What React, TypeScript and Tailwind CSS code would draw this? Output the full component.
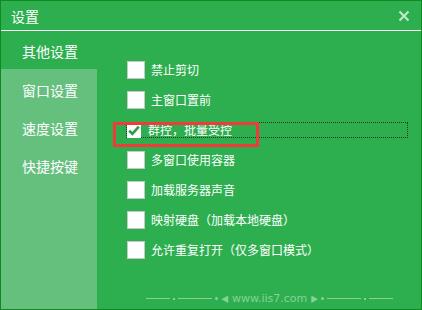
import React from 'react';

const font = { fontFamily: '"Microsoft YaHei", "Noto Sans CJK SC", "Noto Sans", sans-serif' };

const menu = ['窗口设置', '速度设置', '快捷按键'];

const opts = [
  { label: '禁止剪切' },
  { label: '主窗口置前' },
  { label: '群控，批量受控', checked: true },
  { label: '多窗口使用容器' },
  { label: '加载服务器声音' },
  { label: '映射硬盘（加载本地硬盘）' },
  { label: '允许重复打开（仅多窗口模式）' },
];

const Box = () => <div className="w-[18px] h-[18px] shrink-0 bg-white border border-[#c8c8c8]" />;

export default function App() {
  return (
    <div
      className="relative w-[422px] h-[310px] bg-[#2daf50] border border-[#10891f] flex flex-col text-white overflow-hidden"
      style={font}
    >
      {/* title */}
      <div className="h-[30px] shrink-0 flex items-center justify-between pl-[10px] pr-[10px] border-b border-white">
        <span className="text-[14px] leading-none">设置</span>
        <svg width="12" height="12" viewBox="0 0 12 12" className="mr-[1px]">
          <path d="M1.5 1.5 L10.5 10.5 M10.5 1.5 L1.5 10.5" stroke="#bfe8c9" strokeWidth="2.2" />
        </svg>
      </div>

      <div className="flex flex-1 min-h-0">
        {/* sidebar */}
        <div className="w-[96px] shrink-0 flex flex-col text-[14px]">
          <div className="h-[38px] flex items-center pl-[21px] pt-[2px]">其他设置</div>
          <div className="flex-1 bg-[#65c07e] pt-[2px]">
            {menu.map((m) => (
              <div key={m} className="h-[38px] flex items-center pl-[21px]">
                {m}
              </div>
            ))}
          </div>
        </div>

        {/* content */}
        <div className="flex-1 flex flex-col pt-[24px] pl-[30px] text-[12px]">
          {opts.map((o) =>
            o.checked ? (
              <div key={o.label} className="h-[30px] flex items-center">
                <div className="h-[16px] w-[282px] -ml-[1px] border border-dotted border-[#1b3b22] flex items-center">
                  <div className="w-[14px] h-[15px] bg-white flex items-center justify-center">
                    <svg width="12" height="11" viewBox="0 0 12 11">
                      <path d="M1.2 5.6 L4.4 8.8 L10.8 1.6" fill="none" stroke="#2a9c46" strokeWidth="2.6" />
                    </svg>
                  </div>
                  <span className="ml-[7px] leading-none">{o.label}</span>
                </div>
              </div>
            ) : (
              <div key={o.label} className="h-[30px] flex items-center gap-[6px]">
                <Box />
                <span className="leading-none">{o.label}</span>
              </div>
            )
          )}
        </div>
      </div>

      {/* footer */}
      <div className="absolute left-0 right-0 bottom-[5px] flex items-center pl-[145px] text-[#86d299]">
        <div className="flex items-center gap-[3px]">
          <div className="w-[24px] h-px bg-[#86d299]" />
          <div className="w-[2px] h-[2px] bg-[#86d299]" />
          <div className="w-[34px] h-px bg-[#86d299]" />
          <div className="w-[3px] h-[3px] rounded-full bg-[#86d299]" />
          <span className="text-[8px] leading-none">◀</span>
          <span className="text-[11px] leading-none" style={{ fontFamily: '"DejaVu Sans", sans-serif' }}>
            www.iis7.com
          </span>
          <span className="text-[8px] leading-none">▶</span>
          <div className="w-[3px] h-[3px] rounded-full bg-[#86d299]" />
          <div className="w-[34px] h-px bg-[#86d299]" />
          <div className="w-[2px] h-[2px] bg-[#86d299]" />
          <div className="w-[24px] h-px bg-[#86d299]" />
        </div>
      </div>

      {/* annotation */}
      <div className="absolute left-[112px] top-[121px] w-[146px] h-[25px] border-[3px] border-[#f23a3a]" />
    </div>
  );
}
